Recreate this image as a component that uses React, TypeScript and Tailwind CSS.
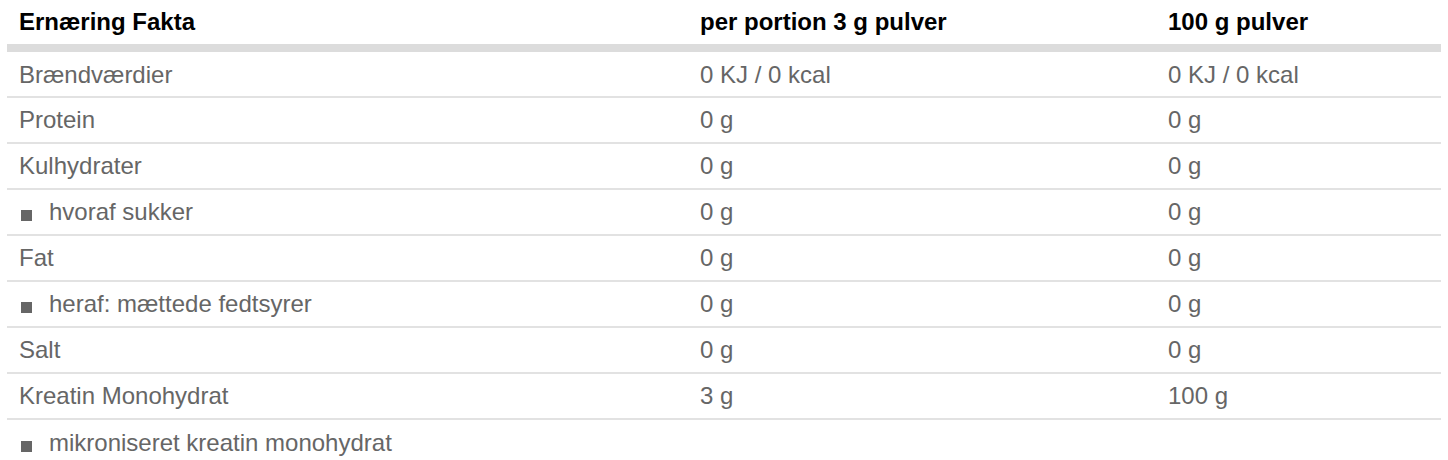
const rows: { label: string; sub?: boolean; portion: string; per100: string }[] = [
  { label: 'Brændværdier', portion: '0 KJ / 0 kcal', per100: '0 KJ / 0 kcal' },
  { label: 'Protein', portion: '0 g', per100: '0 g' },
  { label: 'Kulhydrater', portion: '0 g', per100: '0 g' },
  { label: 'hvoraf sukker', sub: true, portion: '0 g', per100: '0 g' },
  { label: 'Fat', portion: '0 g', per100: '0 g' },
  { label: 'heraf: mættede fedtsyrer', sub: true, portion: '0 g', per100: '0 g' },
  { label: 'Salt', portion: '0 g', per100: '0 g' },
  { label: 'Kreatin Monohydrat', portion: '3 g', per100: '100 g' },
]

function Bullet() {
  return <span className="inline-block w-[11px] h-[11px] bg-[#666] ml-[2px] mr-[17px] align-[-1px]"></span>
}

export default function App() {
  return (
    <div className="w-[1448px] h-[460px] bg-white px-[7px] font-['Liberation_Sans',Arial,sans-serif] text-[24px] leading-[24px] overflow-hidden">
      <table className="w-full table-fixed border-collapse">
        <colgroup>
          <col className="w-[681px]" />
          <col className="w-[468px]" />
          <col />
        </colgroup>
        <thead>
          <tr className="border-b-[8px] border-[#dcdcdc]">
            <th className="h-[48px] px-3 text-left font-bold text-black">Ernæring Fakta</th>
            <th className="h-[48px] px-3 text-left font-bold text-black">per portion 3 g pulver</th>
            <th className="h-[48px] px-3 text-left font-bold text-black">100 g pulver</th>
          </tr>
        </thead>
        <tbody className="text-[#666]">
          {rows.map((r, i) => (
            <tr key={r.label} className="border-b-2 border-[#e2e2e2]">
              <td className={i === 0 ? 'h-[49px] px-3 pt-[2px]' : 'h-[46px] px-3'}>
                {r.sub && <Bullet />}
                {r.label}
              </td>
              <td className={i === 0 ? 'h-[49px] px-3 pt-[2px]' : 'h-[46px] px-3'}>{r.portion}</td>
              <td className={i === 0 ? 'h-[49px] px-3 pt-[2px]' : 'h-[46px] px-3'}>{r.per100}</td>
            </tr>
          ))}
          <tr>
            <td className="h-[46px] px-3" colSpan={3}>
              <Bullet />
              mikroniseret kreatin monohydrat
            </td>
          </tr>
        </tbody>
      </table>
    </div>
  )
}
